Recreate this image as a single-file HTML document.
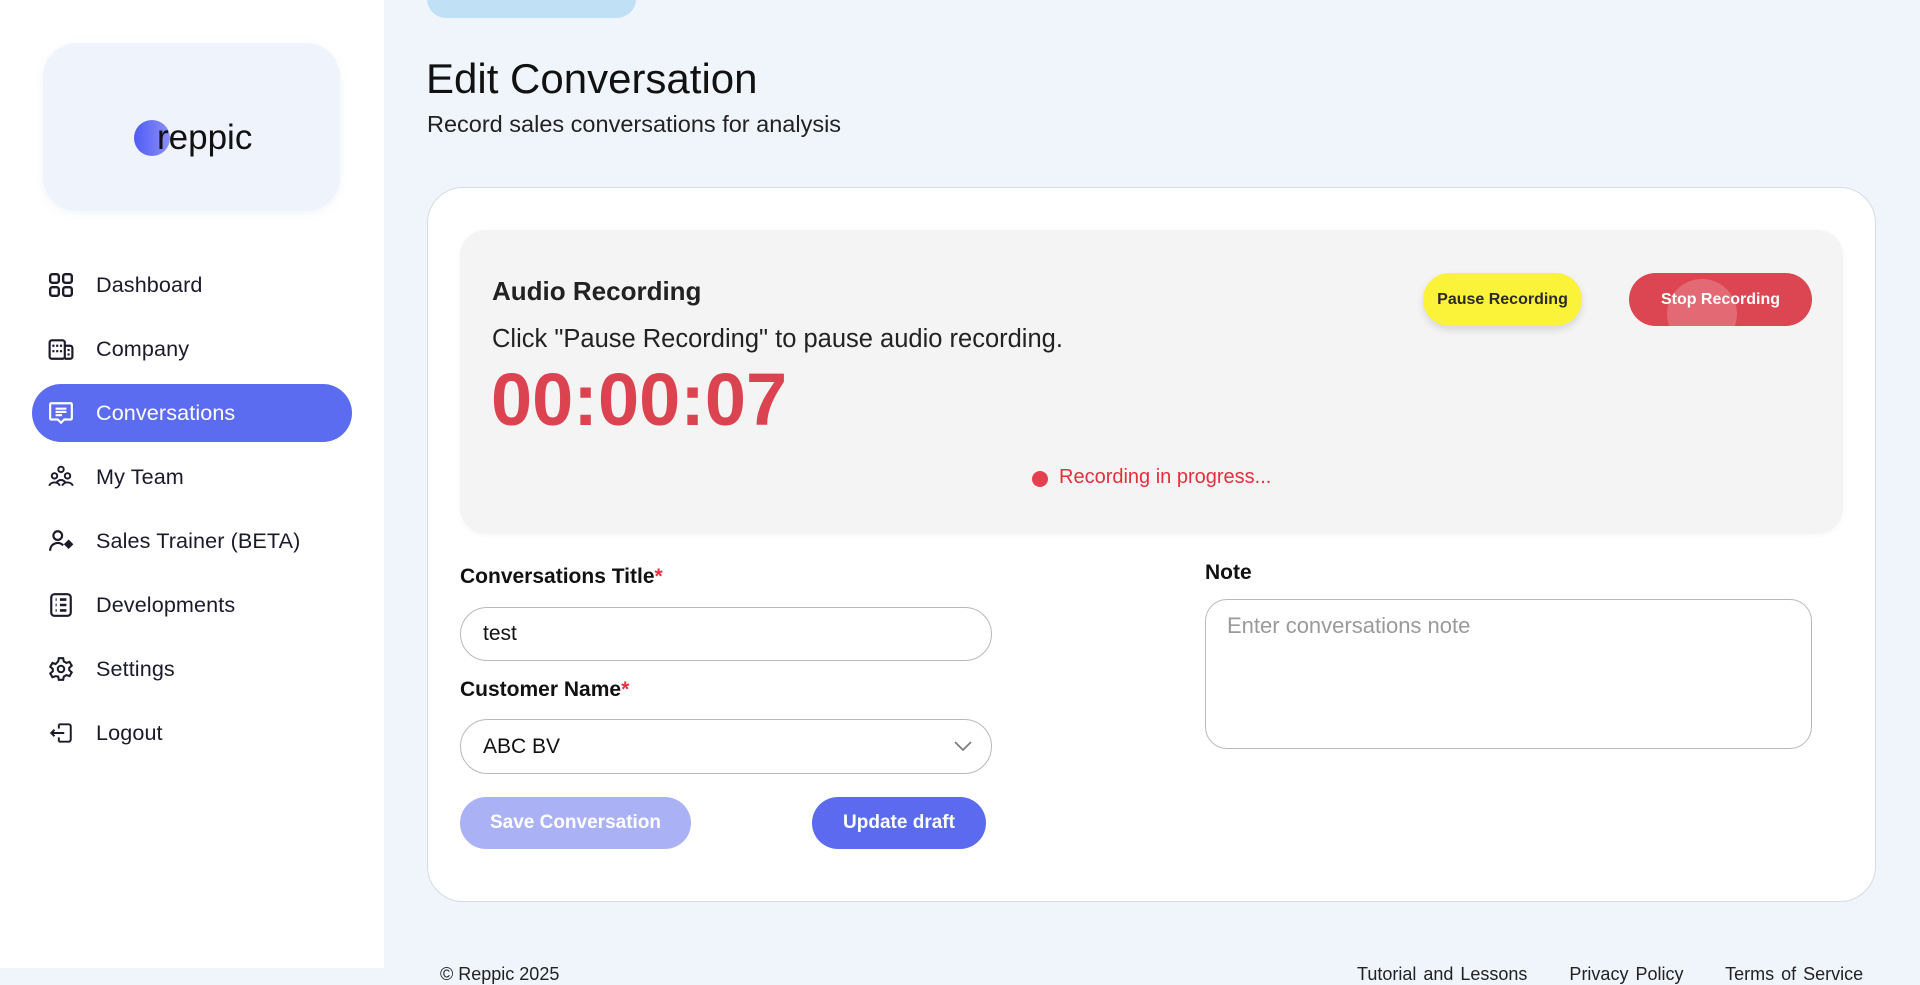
<!DOCTYPE html>
<html><head><meta charset="utf-8"><style>
*{box-sizing:border-box;margin:0;padding:0}
body{width:1920px;height:968px;overflow:hidden;background:#f0f5fc;font-family:"Liberation Sans",sans-serif;color:#111;position:relative}
.a{position:absolute;white-space:nowrap}
.side{position:absolute;left:0;top:0;width:384px;height:968px;background:#fff}
.logo{position:absolute;left:43px;top:43px;width:297px;height:168px;background:#eff4fc;border-radius:34px;box-shadow:0 2px 8px rgba(200,210,230,.25)}
.nav{position:absolute;left:96px;font-size:21.6px;color:#1a1a2a;transform:translateY(-50%);letter-spacing:.1px}
.ic{position:absolute;left:48px;width:26px;height:26px;transform:translateY(-50%)}
.pill{position:absolute;left:32px;top:384px;width:320px;height:58px;background:#5b6cf0;border-radius:29px}
.card{position:absolute;left:427px;top:187px;width:1449px;height:715px;background:#fff;border:1px solid #d6dce4;border-radius:36px}
.panel{position:absolute;left:460px;top:230px;width:1383px;height:304px;background:#f4f4f4;border-radius:26px;box-shadow:0 1px 6px rgba(0,0,0,.04)}
.btn{position:absolute;border-radius:30px;display:flex;align-items:center;justify-content:center;font-weight:bold;overflow:hidden}
.lbl{position:absolute;font-size:21px;font-weight:bold;color:#111}
.inp{position:absolute;border:1px solid #b9b9b9;border-radius:30px;background:#fff;font-size:21px;padding-left:22px;display:flex;align-items:center}
</style></head><body>
<div class="side">
  <div class="logo">
    <div class="a" style="left:91px;top:77px;width:36px;height:36px;border-radius:50%;background:linear-gradient(90deg,#4f5cf5,#8b8ff8)"></div>
    <div class="a" style="left:114px;top:75px;font-size:35px;color:#111">reppic</div>
  </div>
  <div class="pill"></div>
  <svg class="ic" style="top:285px" viewBox="0 0 24 24" fill="none" stroke="#1a1a2a" stroke-width="2.2"><rect x="2" y="2" width="8" height="8" rx="2"/><rect x="14" y="2" width="8" height="8" rx="2"/><rect x="2" y="14" width="8" height="8" rx="2"/><rect x="14" y="14" width="8" height="8" rx="2"/></svg>
  <div class="nav" style="top:285px">Dashboard</div>
  <svg class="ic" style="top:349px" viewBox="0 0 24 24" fill="none" stroke="#1a1a2a" stroke-width="2"><rect x="1.5" y="4" width="14" height="17" rx="2"/><path d="M15.5 9h5a2 2 0 0 1 2 2v8a2 2 0 0 1-2 2h-5M5 8v2M8.5 8v2M12 8v2M5 13v2M8.5 13v2M12 13v2M19 12v2M19 16v2"/></svg>
  <div class="nav" style="top:349px">Company</div>
  <svg class="ic" style="top:413px" viewBox="0 0 24 24" fill="none" stroke="#fff" stroke-width="2"><path d="M3 3h18a1 1 0 0 1 1 1v13a1 1 0 0 1-1 1h-6l-3 3-3-3H3a1 1 0 0 1-1-1V4a1 1 0 0 1 1-1z"/><path d="M7 8h10M7 11h10M7 14h6"/></svg>
  <div class="nav" style="top:413px;color:#fff">Conversations</div>
  <svg class="ic" style="top:477px" viewBox="0 0 24 24" fill="none" stroke="#1a1a2a" stroke-width="1.8"><circle cx="12" cy="5" r="2.5"/><circle cx="6" cy="11" r="2.5"/><circle cx="18" cy="11" r="2.5"/><path d="M1 20c2-4 8-4 10 0M13 20c2-4 8-4 10 0M8 17c2-3 6-3 8 0"/></svg>
  <div class="nav" style="top:477px">My Team</div>
  <svg class="ic" style="top:541px" viewBox="0 0 24 24" fill="none" stroke="#1a1a2a" stroke-width="2"><circle cx="9" cy="7" r="4"/><path d="M2 21v-1a7 7 0 0 1 12-4"/><path d="M19 12l3 3-3 3-3-3z" fill="#1a1a2a"/></svg>
  <div class="nav" style="top:541px">Sales Trainer (BETA)</div>
  <svg class="ic" style="top:605px" viewBox="0 0 24 24" fill="none" stroke="#1a1a2a" stroke-width="2"><rect x="3" y="2" width="18" height="20" rx="3"/><path d="M7 7h1M7 12h1M7 17h1M11 7h6M11 12h6M11 17h6" stroke-width="2.4"/></svg>
  <div class="nav" style="top:605px">Developments</div>
  <svg class="ic" style="top:669px" viewBox="0 0 24 24" fill="none" stroke="#1a1a2a" stroke-width="1.9"><circle cx="12" cy="12" r="3"/><path d="M10 2h4l.6 3 2.4 1.4 2.9-1 2 3.5-2.3 2v2.2l2.3 2-2 3.5-2.9-1-2.4 1.4-.6 3h-4l-.6-3L7 18.6l-2.9 1-2-3.5 2.3-2v-2.2l-2.3-2 2-3.5 2.9 1L9.4 5z"/></svg>
  <div class="nav" style="top:669px">Settings</div>
  <svg class="ic" style="top:733px" viewBox="0 0 24 24" fill="none" stroke="#1a1a2a" stroke-width="1.8"><path d="M10 4h9a2 2 0 0 1 2 2v12a2 2 0 0 1-2 2h-9M10 8V4M10 16v4M15 12H3M6 9l-3 3 3 3"/></svg>
  <div class="nav" style="top:733px">Logout</div>
</div>

<div class="a" style="left:427px;top:-20px;width:209px;height:38px;background:#bfe0f5;border-radius:20px"></div>
<div class="a" style="left:426px;top:55px;font-size:42px;color:#111">Edit Conversation</div>
<div class="a" style="left:427px;top:111px;font-size:23.5px;color:#222">Record sales conversations for analysis</div>

<div class="card"></div>
<div class="panel"></div>
<div class="a" style="left:492px;top:276px;font-size:26px;font-weight:bold;color:#222">Audio Recording</div>
<div class="a" style="left:492px;top:325px;font-size:25.5px;color:#222">Click "Pause Recording" to pause audio recording.</div>
<div class="a" style="left:491px;top:357px;font-size:74px;font-weight:bold;color:#dc4350">00:00:07</div>
<div class="btn" style="left:1423px;top:273px;width:159px;height:53px;background:#fbf23a;color:#2a2a2a;font-size:16px;box-shadow:0 4px 8px rgba(0,0,0,.12)">Pause Recording</div>
<div class="btn" style="left:1629px;top:273px;width:183px;height:53px;background:#dc4552;color:#fff;font-size:16px">
  <div class="a" style="left:38px;top:6px;width:70px;height:70px;border-radius:50%;background:rgba(255,255,255,.2)"></div>
  <span style="position:relative">Stop Recording</span></div>
<div class="a" style="left:1032px;top:471px;width:16px;height:16px;border-radius:50%;background:#e5404f"></div>
<div class="a" style="left:1059px;top:466px;font-size:20px;color:#e0303f">Recording in progress...</div>

<div class="lbl" style="left:460px;top:565px">Conversations Title<span style="color:#e5303f">*</span></div>
<div class="inp" style="left:460px;top:607px;width:532px;height:54px">test</div>
<div class="lbl" style="left:460px;top:678px">Customer Name<span style="color:#e5303f">*</span></div>
<div class="inp" style="left:460px;top:719px;width:532px;height:55px">ABC BV
  <svg style="position:absolute;right:18px;top:20px" width="20" height="12" viewBox="0 0 20 12" fill="none" stroke="#777" stroke-width="1.6"><path d="M2 2l8 8 8-8"/></svg></div>
<div class="btn" style="left:460px;top:797px;width:231px;height:52px;background:#aab2f5;color:#fff;font-size:19px">Save Conversation</div>
<div class="btn" style="left:812px;top:797px;width:174px;height:52px;background:#5b6aef;color:#fff;font-size:19px">Update draft</div>

<div class="lbl" style="left:1205px;top:561px">Note</div>
<div class="a" style="left:1205px;top:599px;width:607px;height:150px;border:1px solid #b9b9b9;border-radius:22px;background:#fff"></div>
<div class="a" style="left:1227px;top:613px;font-size:22px;color:#9a9a9a">Enter conversations note</div>

<div class="a" style="left:440px;top:964px;font-size:18px;color:#222">© Reppic 2025</div>
<div class="a" style="left:1357px;top:964px;font-size:18px;color:#222;word-spacing:2px">Tutorial and Lessons &nbsp;&nbsp;&nbsp;&nbsp; Privacy Policy &nbsp;&nbsp;&nbsp;&nbsp; Terms of Service</div>
</body></html>
